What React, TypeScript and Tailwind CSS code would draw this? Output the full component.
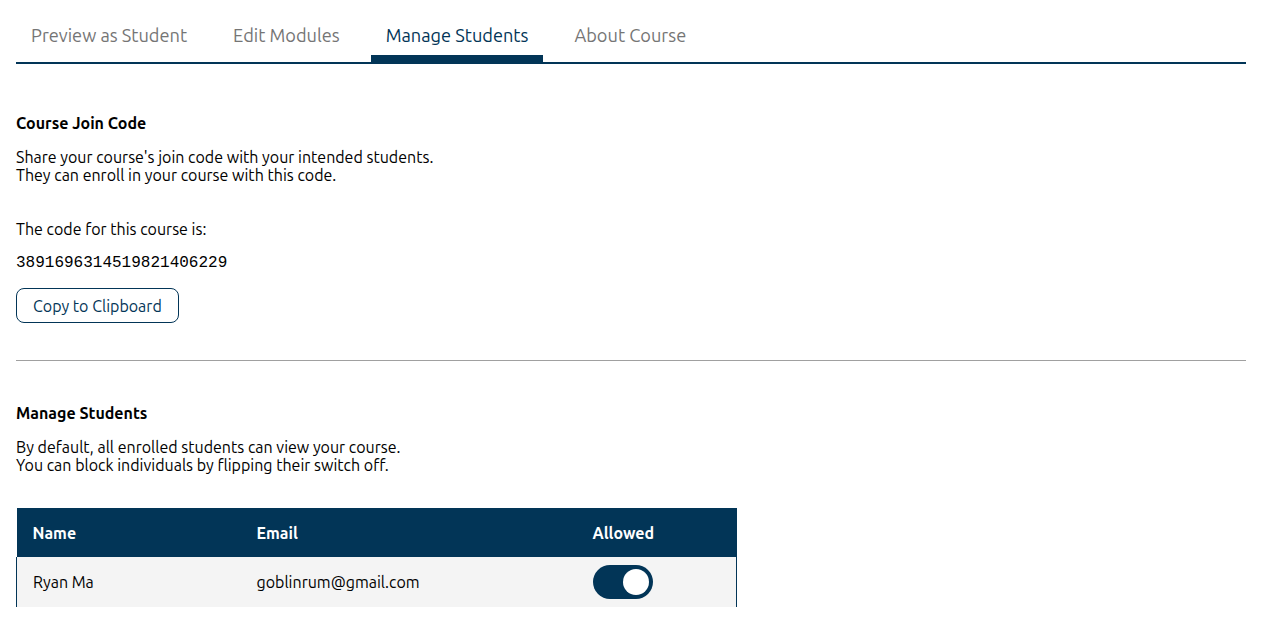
import { useState } from "react"

const NAVY = "#023557"

function Tab({ label, active }: { label: string; active?: boolean }) {
  return (
    <button
      className={
        active
          ? "px-[15px] pt-[22px] pb-[6px] text-[18.2px] leading-[27px] text-[#023557] border-b-[7px] border-[#023557]"
          : "px-[15px] pt-[22px] pb-[6px] text-[18.2px] leading-[27px] text-[#757575] border-b-[7px] border-transparent"
      }
    >
      {label}
    </button>
  )
}

function Toggle({ on, onChange }: { on: boolean; onChange: () => void }) {
  return (
    <button
      onClick={onChange}
      className={
        on
          ? "relative w-[60px] h-[34px] rounded-full bg-[#023557]"
          : "relative w-[60px] h-[34px] rounded-full bg-[#cccccc]"
      }
    >
      <span
        className={
          on
            ? "absolute top-[4px] left-[30px] w-[26px] h-[26px] rounded-full bg-white"
            : "absolute top-[4px] left-[4px] w-[26px] h-[26px] rounded-full bg-white"
        }
      />
    </button>
  )
}

export default function App() {
  const [allowed, setAllowed] = useState(true)

  return (
    <div className="min-h-screen bg-white pl-4 pr-[23px] font-['Ubuntu','Noto_Sans',sans-serif] text-[16px] text-black">
      <nav className="flex gap-4 border-b-2" style={{ borderColor: NAVY }}>
        <Tab label="Preview as Student" />
        <Tab label="Edit Modules" />
        <Tab label="Manage Students" active />
        <Tab label="About Course" />
      </nav>

      <section className="pt-[50px]">
        <h3 className="font-bold leading-[18px]">Course Join Code</h3>
        <p className="mt-4 leading-[18px]">
          Share your course's join code with your intended students.
          <br />
          They can enroll in your course with this code.
        </p>
        <p className="mt-9 leading-[18px]">The code for this course is:</p>
        <p className="mt-[16px] leading-[18px] font-['Liberation_Mono',monospace] text-[16px]">
          3891696314519821406229
        </p>
        <button className="mt-[16px] h-[35px] px-4 rounded-lg border border-[#023557] text-[#023557] leading-[18px]">
          Copy to Clipboard
        </button>
      </section>

      <hr className="mt-[37px] border-0 h-px bg-[#a0a0a0]" />

      <section className="pt-[43px]">
        <h3 className="font-bold leading-[18px]">Manage Students</h3>
        <p className="mt-4 leading-[18px]">
          By default, all enrolled students can view your course.
          <br />
          You can block individuals by flipping their switch off.
        </p>

        <table className="mt-[34px] w-[721px] border-collapse text-left">
          <thead>
            <tr className="bg-[#023557] text-white h-[49px]">
              <th className="w-[224px] px-4 font-bold">Name</th>
              <th className="w-[336px] px-4 font-bold">Email</th>
              <th className="px-4 font-bold">Allowed</th>
            </tr>
          </thead>
          <tbody>
            <tr className="bg-[#f4f4f4] h-[50px] border-x border-[#023557]">
              <td className="px-4">Ryan Ma</td>
              <td className="px-4">goblinrum@gmail.com</td>
              <td className="px-4 align-middle">
                <div className="flex items-center">
                  <Toggle on={allowed} onChange={() => setAllowed(!allowed)} />
                </div>
              </td>
            </tr>
          </tbody>
        </table>
      </section>
    </div>
  )
}
